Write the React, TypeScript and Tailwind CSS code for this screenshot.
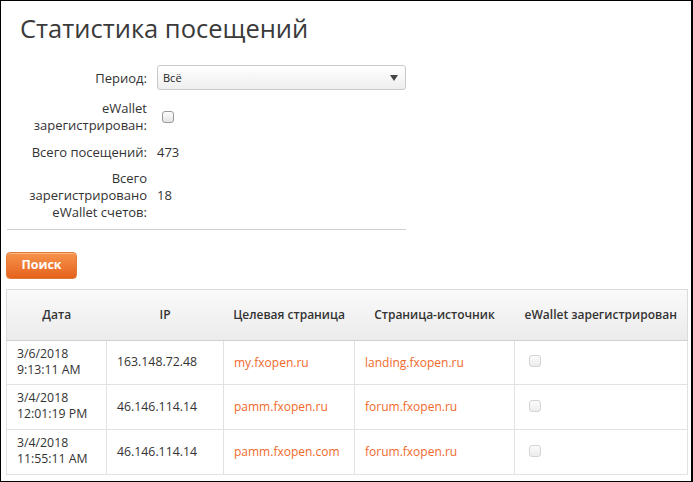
import React from 'react';

interface Visit {
  date: string;
  time: string;
  ip: string;
  target: string;
  source: string;
  registered: boolean;
}

const visits: Visit[] = [
  {
    date: '3/6/2018',
    time: '9:13:11 AM',
    ip: '163.148.72.48',
    target: 'my.fxopen.ru',
    source: 'landing.fxopen.ru',
    registered: false,
  },
  {
    date: '3/4/2018',
    time: '12:01:19 PM',
    ip: '46.146.114.14',
    target: 'pamm.fxopen.ru',
    source: 'forum.fxopen.ru',
    registered: false,
  },
  {
    date: '3/4/2018',
    time: '11:55:11 AM',
    ip: '46.146.114.14',
    target: 'pamm.fxopen.com',
    source: 'forum.fxopen.ru',
    registered: false,
  },
];

const Checkbox = ({ faded }: { faded?: boolean }) => (
  <span
    className={`block w-[12px] h-[12px] rounded-[3px] border ${
      faded
        ? 'border-[#d4d4d4] bg-gradient-to-b from-[#fbfbfb] to-[#ececec]'
        : 'border-[#9a9a9a] bg-gradient-to-b from-[#fdfdfd] to-[#e3e3e3]'
    }`}
  />
);

const FormRow = ({
  label,
  children,
}: {
  label: React.ReactNode;
  children: React.ReactNode;
}) => (
  <div className="flex items-center">
    <div className="w-[141px] shrink-0 text-right">{label}</div>
    <div className="pl-[10px] flex items-center">{children}</div>
  </div>
);

export default function App() {
  return (
    <div
      className="w-[693px] h-[482px] overflow-hidden bg-white border-l border-t border-b border-r-2 border-black text-[12px] text-[#333]"
      style={{ fontFamily: '"Open Sans", "Noto Sans", sans-serif' }}
    >
      <h1 className="pl-[19px] pt-[10px] text-[25.5px] leading-[34px] text-[#3a3a3a] font-normal">
        Статистика посещений
      </h1>

      <div className="mt-[20px] w-[400px] ml-[5px] flex flex-col text-[13px] leading-[16px]">
        <FormRow label="Период:">
          <div className="w-[249px] h-[25px] rounded-[3px] border border-[#c9c9c9] bg-gradient-to-b from-[#ffffff] to-[#eeeeee] flex items-center justify-between pl-[5px] pr-[7px] text-[11px] text-[#222]">
            <span>Всё</span>
            <svg width="8" height="6" viewBox="0 0 8 6">
              <path d="M0 0 L8 0 L4 6 Z" fill="#444" />
            </svg>
          </div>
        </FormRow>

        <div className="mt-[10px]">
          <FormRow
            label={
              <span className="leading-[17px]">
                eWallet
                <br />
                зарегистрирован:
              </span>
            }
          >
            <span className="ml-[5px]">
              <Checkbox />
            </span>
          </FormRow>
        </div>

        <div className="mt-[10px]">
          <FormRow label="Всего посещений:">
            <span>473</span>
          </FormRow>
        </div>

        <div className="mt-[10px] leading-[17px]">
          <FormRow
            label={
              <>
                Всего
                <br />
                зарегистрировано
                <br />
                eWallet счетов:
              </>
            }
          >
            <span>18</span>
          </FormRow>
        </div>

        <div className="mt-[8px] ml-[1px] border-t border-[#d0d0d0]" />
      </div>

      <button className="mt-[22px] ml-[5px] w-[71px] h-[27px] rounded-[4px] border border-[#e07a3a] bg-gradient-to-b from-[#f7934a] to-[#e4621a] text-white font-bold text-[12.5px] shadow-[inset_0_1px_0_rgba(255,255,255,0.35)]">
        Поиск
      </button>

      <table className="mt-[10px] ml-[5px] w-[681px] border-collapse border border-[#dcdcdc] table-fixed">
        <colgroup>
          <col className="w-[100px]" />
          <col className="w-[117px]" />
          <col className="w-[131px]" />
          <col className="w-[160px]" />
          <col className="w-[173px]" />
        </colgroup>
        <thead>
          <tr className="h-[51px] bg-gradient-to-b from-[#fafafa] to-[#ebebeb]">
            {[
              'Дата',
              'IP',
              'Целевая страница',
              'Страница-источник',
              'eWallet зарегистрирован',
            ].map(h => (
              <th
                key={h}
                className="font-semibold text-center text-[#333] border-b border-[#d0d0d0] px-[4px]"
              >
                {h}
              </th>
            ))}
          </tr>
        </thead>
        <tbody>
          {visits.map((v, i) => (
            <tr key={i} className={i === 0 ? 'h-[44px]' : 'h-[45px]'}>
              <td className="border border-[#e2e2e2] pl-[10px] leading-[16px] text-[12.3px]">
                <span className="block -mt-[2px]">
                  {v.date}
                  <br />
                  {v.time}
                </span>
              </td>
              <td className="border border-[#e2e2e2] pl-[10px] text-[12.3px]">
                {v.ip}
              </td>
              <td className="border border-[#e2e2e2] pl-[10px] text-[#f0692a]">
                {v.target}
              </td>
              <td className="border border-[#e2e2e2] pl-[10px] text-[#f0692a]">
                {v.source}
              </td>
              <td className="border border-[#e2e2e2] pl-[14px]">
                <span className="block -mt-[3px]">
                  <Checkbox faded />
                </span>
              </td>
            </tr>
          ))}
        </tbody>
      </table>
    </div>
  );
}
